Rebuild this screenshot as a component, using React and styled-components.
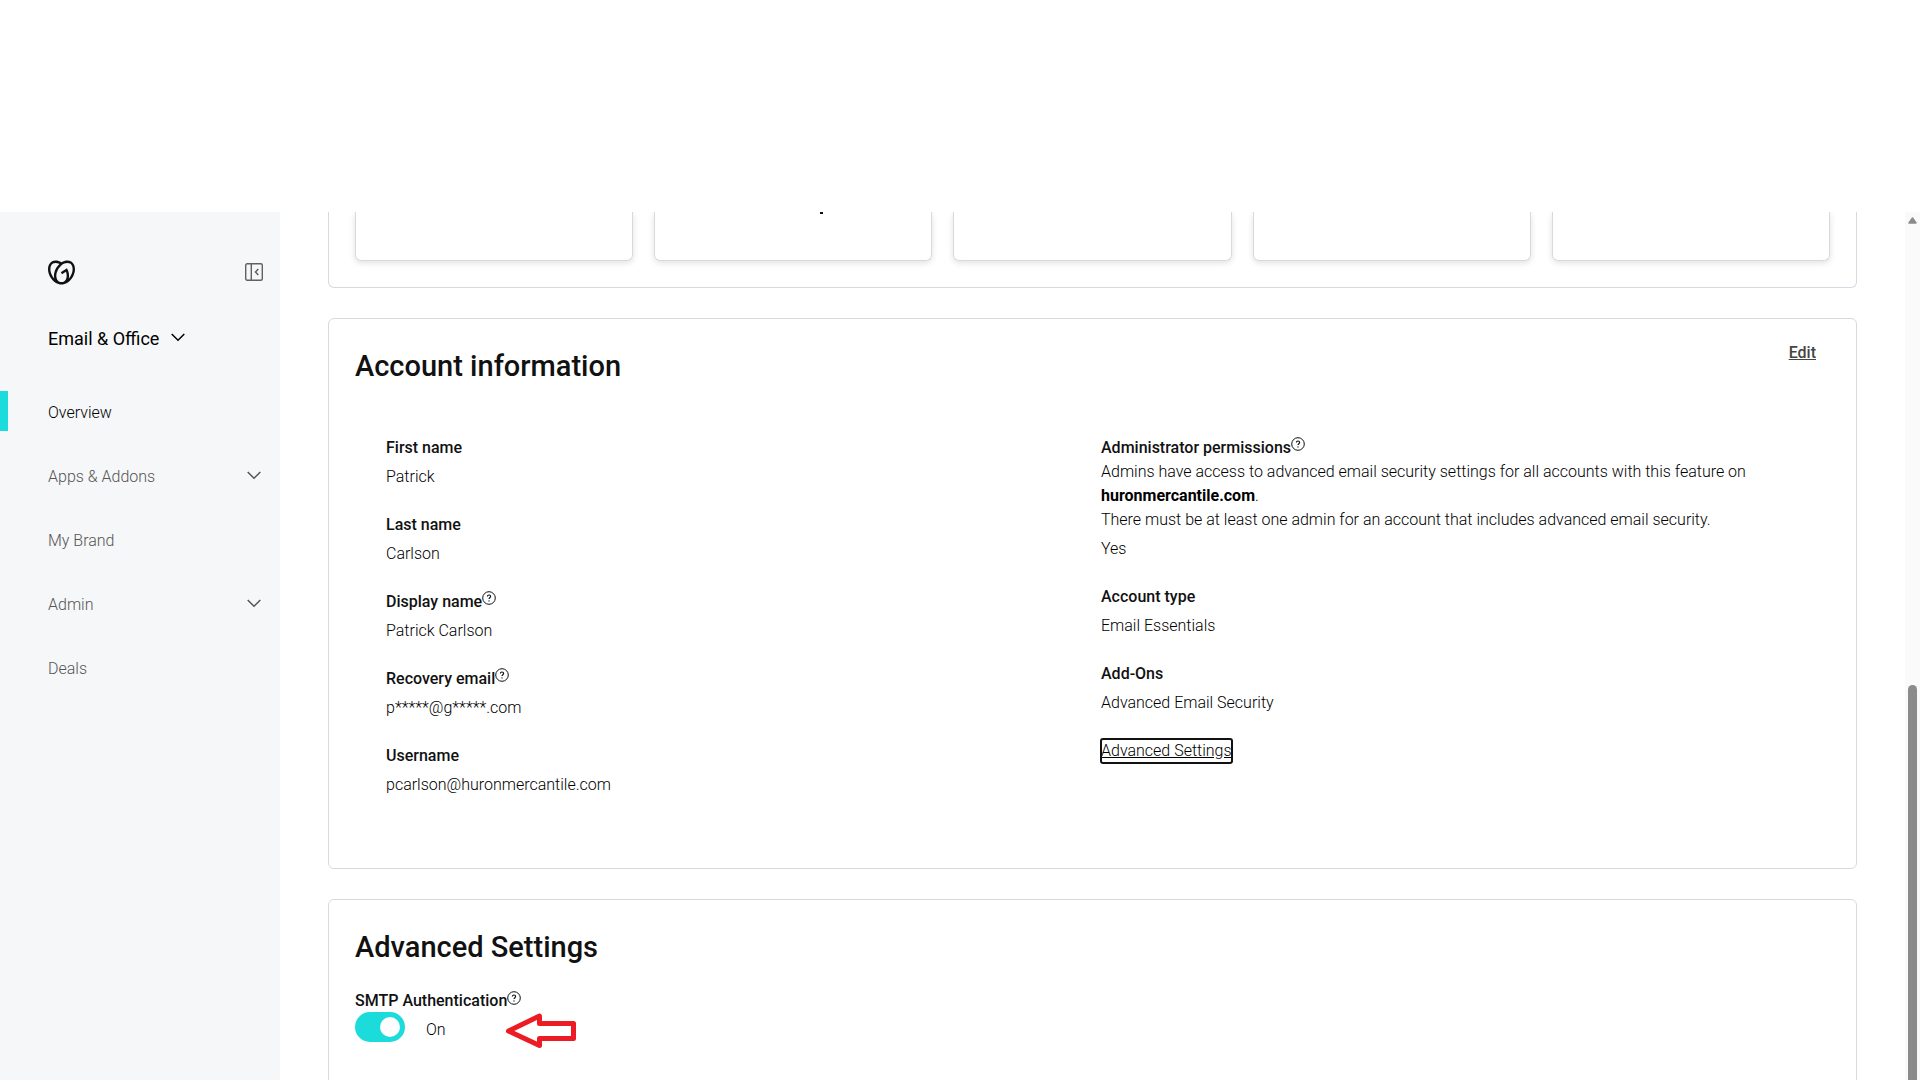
import React from 'react';
import styled, {createGlobalStyle} from 'styled-components';
import {SiGodaddy} from 'react-icons/si';

const GlobalStyle = createGlobalStyle`
  *, *::before, *::after {
    box-sizing: border-box;
  }

  body {
    margin: 0;
    background: #ffffff;
    color: #111111;
    font-family: Roboto, "Liberation Sans", sans-serif;
    font-size: 16px;
    line-height: 24px;
  }

  h2, p, dl, dd, ul {
    margin: 0;
    padding: 0;
  }

  button {
    padding: 0;
    border: 0;
    background: none;
    color: inherit;
    font: inherit;
    cursor: pointer;
  }
`;

const Page = styled.div`
  display: flex;
  flex-direction: column;
  height: 100vh;
  overflow: hidden;
`;

const TopSpace = styled.header`
  flex: none;
  height: 212px;
`;

const Shell = styled.div`
  display: flex;
  flex: 1;
  min-height: 0;
`;

const Sidebar = styled.aside`
  flex: none;
  width: 280px;
  padding-top: 48px;
  background: #f5f7f8;
`;

const SidebarTop = styled.div`
  display: flex;
  align-items: center;
  justify-content: space-between;
  height: 24px;
  padding: 0 17px 0 48px;
`;

const CollapseButton = styled.button`
  display: flex;
`;

const ProductSwitch = styled.button`
  display: flex;
  align-items: center;
  gap: 12px;
  margin: 43px 0 0 48px;
  font-size: 18px;
  color: #000000;
`;

const NavList = styled.ul`
  display: flex;
  flex-direction: column;
  gap: 24px;
  margin-top: 40px;
  list-style: none;
`;

const NavLink = styled.a`
  display: flex;
  align-items: center;
  justify-content: space-between;
  height: 40px;
  padding: 4px 19px 0 40px;
  border-left: 8px solid ${props => props.$active ? '#1bdbdb' : 'transparent'};
  color: ${props => props.$active ? '#000000' : '#555555'};
  font-weight: 300;
  text-decoration: none;
`;

const Main = styled.main`
  display: flex;
  flex: 1;
  flex-direction: column;
  gap: 30px;
  min-width: 0;
  padding: 0 48px;
  overflow: hidden;
`;

const Card = styled.section`
  flex: none;
  padding: 26px;
  border: 1px solid #d4dbe0;
  border-radius: 6px;
`;

const TileCard = styled(Card)`
  padding-top: 0;
  border-top: 0;
  border-top-left-radius: 0;
  border-top-right-radius: 0;
`;

const Tiles = styled.div`
  display: grid;
  grid-template-columns: repeat(5, 1fr);
  gap: 21px;
`;

const Tile = styled.div`
  height: 49px;
  border: 1px solid #d4dbe0;
  border-top: 0;
  border-radius: 0 0 6px 6px;
  box-shadow: 0 2px 6px rgba(0, 0, 0, 0.12);
`;

const TileMark = styled.span`
  display: block;
  width: 3px;
  height: 2px;
  margin-left: 165px;
  background: #111111;
`;

const CardHead = styled.div`
  display: flex;
  align-items: flex-start;
  justify-content: space-between;
`;

const Title = styled.h2`
  padding-top: 3px;
  font-size: 29px;
  font-weight: 500;
  line-height: 36px;
`;

const EditButton = styled.button`
  margin-right: 14px;
  height: 16px;
  line-height: 16px;
  font-weight: 500;
  color: #444444;
  text-decoration: underline;
`;

const Columns = styled.div`
  display: grid;
  grid-template-columns: 1fr 1fr;
  gap: 17px;
  padding: 52px 31px 45px;
`;

const Fields = styled.dl`
  display: flex;
  flex-direction: column;
  gap: 24px;
  color: #000000;
  font-weight: 300;
`;

const Label = styled.dt`
  display: flex;
  align-items: center;
  height: 24px;
  color: #111111;
  font-weight: 500;
`;

const Value = styled.dd`
  padding-top: 5px;
`;

const Hint = styled.dd`
  strong {
    font-weight: 700;
  }
`;

const HelpButton = styled.button`
  display: flex;
  align-self: flex-start;
  margin-top: 1px;
`;

const SettingsLink = styled.a`
  align-self: flex-start;
  border-radius: 2px;
  outline: 2px solid #111111;
  outline-offset: -1px;
  color: #000000;
  text-decoration: underline;
`;

const SettingName = styled.div`
  display: flex;
  align-items: center;
  height: 22px;
  margin-top: 25px;
  font-weight: 500;
`;

const SwitchRow = styled.div`
  display: flex;
  align-items: flex-start;
  padding-bottom: 8px;
`;

const Switch = styled.input`
  appearance: none;
  display: flex;
  align-items: center;
  width: 50px;
  height: 30px;
  margin: 0;
  padding: 0 5px;
  border-radius: 15px;
  background: #d4dbe0;
  cursor: pointer;

  &::before {
    content: '';
    width: 20px;
    height: 20px;
    border-radius: 50%;
    background: #ffffff;
  }

  &:checked {
    justify-content: flex-end;
    background: #1bdbdb;
  }
`;

const SwitchState = styled.span`
  width: 60px;
  margin: 6px 20px 0 21px;
  color: #000000;
  font-weight: 300;
`;

const ScrollTrack = styled.div`
  flex: none;
  display: flex;
  flex-direction: column;
  align-items: center;
  width: 15px;
  padding-top: 5px;
  background: #fafafa;
`;

const ScrollThumb = styled.div`
  flex: 1;
  width: 9px;
  margin-top: 461px;
  border-radius: 5px 5px 0 0;
  background: #8b8b8b;
`;

const ChevronIcon = styled.svg`
  margin-bottom: 4px;
`;

const CollapseIcon = () => (
  <svg width="18" height="18" viewBox="0 0 18 18" fill="none" stroke="#616161">
    <rect x=".7" y=".7" width="16.600" height="16.600" rx="1.500" strokeWidth="1.400" />
    <path d="M6.300 1V17" strokeWidth="1.400" />
    <path d="M13.300 6L10.500 9L13.300 12" strokeWidth="1.500" />
  </svg>
);

const Chevron = () => (
  <ChevronIcon width="14" height="9" viewBox="0 0 14 9" fill="none" stroke="currentColor" strokeWidth="1.500">
    <path d="M.7 1L7 7.300L13.300 1" />
  </ChevronIcon>
);

const HelpIcon = () => (
  <svg width="14" height="14" viewBox="0 0 14 14" fill="none" stroke="#111111">
    <circle cx="7" cy="7" r="6.300" />
    <path d="M5.400 5.600C5.400 4.600 6.100 4 7 4C7.900 4 8.600 4.600 8.600 5.500C8.600 6.700 7 6.700 7 8.100" strokeWidth="1.200" />
    <circle cx="7" cy="9.900" r=".7" fill="#111111" stroke="none" />
  </svg>
);

const ArrowMark = () => (
  <svg width="71" height="38" viewBox="0 0 71 38" fill="none" stroke="#ed1c24" strokeWidth="5" strokeLinejoin="round">
    <path d="M2.500 19L33.500 4V11.500H67.500V26.500H33.500V33.500Z" />
  </svg>
);

const Help = ({topic}) => (
  <HelpButton type="button" aria-label={`Help: ${topic}`}>
    <HelpIcon />
  </HelpButton>
);

const Field = ({label, value, help, children}) => (
  <div>
    <Label>
      {label}
      {help
        ? <Help topic={label} />
        : null}
    </Label>
    {children}
    <Value>{value}</Value>
  </div>
);

const navItems = [
  {label: 'Overview', active: true},
  {label: 'Apps & Addons', expandable: true},
  {label: 'My Brand'},
  {label: 'Admin', expandable: true},
  {label: 'Deals'}
];

const profileFields = [
  {label: 'First name', value: 'Patrick'},
  {label: 'Last name', value: 'Carlson'},
  {label: 'Display name', value: 'Patrick Carlson', help: true},
  {label: 'Recovery email', value: 'p*****@g*****.com', help: true},
  {label: 'Username', value: 'pcarlson@huronmercantile.com'}
];

const App = () => (
  <Page>
    <GlobalStyle />
    <TopSpace />
    <Shell>
      <Sidebar>
        <SidebarTop>
          <SiGodaddy size={27} color="#111111" />
          <CollapseButton type="button" aria-label="Collapse menu">
            <CollapseIcon />
          </CollapseButton>
        </SidebarTop>
        <ProductSwitch type="button">
          Email &amp; Office
          <Chevron />
        </ProductSwitch>
        <nav>
          <NavList>
            {navItems.map(item => (
              <li key={item.label}>
                <NavLink href="#" $active={item.active}>
                  {item.label}
                  {item.expandable
                    ? <Chevron />
                    : null}
                </NavLink>
              </li>
            ))}
          </NavList>
        </nav>
      </Sidebar>
      <Main>
        <TileCard>
          <Tiles>
            <Tile />
            <Tile><TileMark /></Tile>
            <Tile />
            <Tile />
            <Tile />
          </Tiles>
        </TileCard>
        <Card>
          <CardHead>
            <Title>Account information</Title>
            <EditButton type="button">Edit</EditButton>
          </CardHead>
          <Columns>
            <Fields>
              {profileFields.map(field => <Field key={field.label} {...field} />)}
            </Fields>
            <Fields>
              <Field label="Administrator permissions" value="Yes" help>
                <Hint>
                  Admins have access to advanced email security settings for all accounts with this feature on{' '}
                  <strong>huronmercantile.com</strong>.
                  <br />
                  There must be at least one admin for an account that includes advanced email security.
                </Hint>
              </Field>
              <Field label="Account type" value="Email Essentials" />
              <Field label="Add-Ons" value="Advanced Email Security" />
              <SettingsLink href="#advanced">Advanced Settings</SettingsLink>
            </Fields>
          </Columns>
        </Card>
        <Card id="advanced">
          <Title>Advanced Settings</Title>
          <SettingName>
            <label htmlFor="smtp">SMTP Authentication</label>
            <Help topic="SMTP Authentication" />
          </SettingName>
          <SwitchRow>
            <Switch id="smtp" type="checkbox" role="switch" defaultChecked />
            <SwitchState>On</SwitchState>
            <ArrowMark />
          </SwitchRow>
        </Card>
      </Main>
      <ScrollTrack>
        <svg width="9" height="7" viewBox="0 0 9 7">
          <path d="M4.500 1L8 6H1Z" fill="#8b8b8b" stroke="#8b8b8b" strokeWidth="1.500" strokeLinejoin="round" />
        </svg>
        <ScrollThumb />
      </ScrollTrack>
    </Shell>
  </Page>
);

export default App;
